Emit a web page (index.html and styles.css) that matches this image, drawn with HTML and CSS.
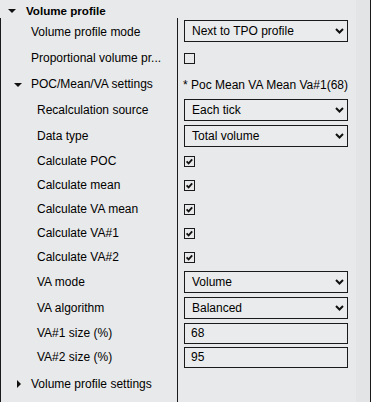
FILE: index.html
```html
<!DOCTYPE html>
<html>
<head>
<meta charset="utf-8">
<link rel="stylesheet" href="styles.css">
</head>
<body>
<div class="panel">
  <div class="content">
    <div class="header">
      <span class="tri-down tri-head"></span>
      <span class="header-text">Volume profile</span>
    </div>
    <div class="grid">
      <div class="row h26">
        <div class="label l1">Volume profile mode</div>
        <div class="value"><div class="select"><span>Next to TPO profile</span><svg class="chev" width="9" height="6" viewBox="0 0 9 6"><polyline points="1,1 4.5,4.5 8,1" fill="none" stroke="#111" stroke-width="2"/></svg></div></div>
      </div>
      <div class="row h26">
        <div class="label l1">Proportional volume pr...</div>
        <div class="value"><span class="cb"></span></div>
      </div>
      <div class="row h26">
        <div class="label l1 group"><span class="tri-down tri-poc"></span>POC/Mean/VA settings</div>
        <div class="value text">* Poc Mean VA Mean Va#1(68)</div>
      </div>
      <div class="row h26">
        <div class="label l2">Recalculation source</div>
        <div class="value"><div class="select"><span>Each tick</span><svg class="chev" width="9" height="6" viewBox="0 0 9 6"><polyline points="1,1 4.5,4.5 8,1" fill="none" stroke="#111" stroke-width="2"/></svg></div></div>
      </div>
      <div class="row h26">
        <div class="label l2">Data type</div>
        <div class="value"><div class="select"><span>Total volume</span><svg class="chev" width="9" height="6" viewBox="0 0 9 6"><polyline points="1,1 4.5,4.5 8,1" fill="none" stroke="#111" stroke-width="2"/></svg></div></div>
      </div>
      <div class="row h24">
        <div class="label l2">Calculate POC</div>
        <div class="value"><span class="cb"><svg width="9" height="9" viewBox="0 0 9 9"><polyline points="1.6,4.4 3.6,6.4 7.2,2.4" fill="none" stroke="#111" stroke-width="1.8"/></svg></span></div>
      </div>
      <div class="row h24">
        <div class="label l2">Calculate mean</div>
        <div class="value"><span class="cb"><svg width="9" height="9" viewBox="0 0 9 9"><polyline points="1.6,4.4 3.6,6.4 7.2,2.4" fill="none" stroke="#111" stroke-width="1.8"/></svg></span></div>
      </div>
      <div class="row h24">
        <div class="label l2">Calculate VA mean</div>
        <div class="value"><span class="cb"><svg width="9" height="9" viewBox="0 0 9 9"><polyline points="1.6,4.4 3.6,6.4 7.2,2.4" fill="none" stroke="#111" stroke-width="1.8"/></svg></span></div>
      </div>
      <div class="row h24">
        <div class="label l2">Calculate VA#1</div>
        <div class="value"><span class="cb"><svg width="9" height="9" viewBox="0 0 9 9"><polyline points="1.6,4.4 3.6,6.4 7.2,2.4" fill="none" stroke="#111" stroke-width="1.8"/></svg></span></div>
      </div>
      <div class="row h24">
        <div class="label l2">Calculate VA#2</div>
        <div class="value"><span class="cb"><svg width="9" height="9" viewBox="0 0 9 9"><polyline points="1.6,4.4 3.6,6.4 7.2,2.4" fill="none" stroke="#111" stroke-width="1.8"/></svg></span></div>
      </div>
      <div class="row h26">
        <div class="label l2">VA mode</div>
        <div class="value"><div class="select"><span>Volume</span><svg class="chev" width="9" height="6" viewBox="0 0 9 6"><polyline points="1,1 4.5,4.5 8,1" fill="none" stroke="#111" stroke-width="2"/></svg></div></div>
      </div>
      <div class="row h26">
        <div class="label l2">VA algorithm</div>
        <div class="value"><div class="select"><span>Balanced</span><svg class="chev" width="9" height="6" viewBox="0 0 9 6"><polyline points="1,1 4.5,4.5 8,1" fill="none" stroke="#111" stroke-width="2"/></svg></div></div>
      </div>
      <div class="row h24">
        <div class="label l2">VA#1 size (%)</div>
        <div class="value"><div class="input">68</div></div>
      </div>
      <div class="row h24">
        <div class="label l2">VA#2 size (%)</div>
        <div class="value"><div class="input">95</div></div>
      </div>
      <div class="row h32">
        <div class="label l1 group"><span class="tri-right"></span>Volume profile settings</div>
        <div class="value"></div>
      </div>
    </div>
  </div>
  <div class="scrollbar"></div>
</div>
</body>
</html>
```
FILE: styles.css
```css
html, body {
  margin: 0;
  padding: 0;
  background: #e8e9ea;
}
body {
  font-family: "Liberation Sans", Arial, sans-serif;
  font-size: 12px;
  color: #000;
}
.panel {
  display: flex;
  width: 371px;
  height: 402px;
  overflow: hidden;
  box-sizing: border-box;
  border-right: 1px solid #1a1a1a;
}
.content {
  flex: 1;
  display: flex;
  flex-direction: column;
}
.scrollbar {
  width: 14px;
  background: #e3e4e5;
}
.header {
  height: 19px;
  display: flex;
  align-items: center;
  position: relative;
}
.header-text {
  font-weight: bold;
  font-size: 11.6px;
  margin-left: 26px;
  padding-top: 2px;
}
.tri-down {
  display: block;
  width: 0;
  height: 0;
  border-left: 4px solid transparent;
  border-right: 4px solid transparent;
  border-top: 4px solid #111;
}
.tri-head {
  position: absolute;
  left: 8px;
  top: 9px;
}
.tri-poc {
  position: absolute;
  left: 13px;
  top: 12px;
}
.tri-right {
  position: absolute;
  left: 16px;
  top: 11px;
  width: 0;
  height: 0;
  border-top: 4px solid transparent;
  border-bottom: 4px solid transparent;
  border-left: 4px solid #111;
}
.grid {
  flex: 1;
  display: flex;
  flex-direction: column;
  border-left: 1px solid #1a1a1a;
}
.row {
  display: flex;
}
.h24 { height: 24px; }
.h26 { height: 26px; }
.h32 { height: 33px; }
.row:first-child { height: 27px; }
.label {
  width: 176px;
  box-sizing: border-box;
  display: flex;
  align-items: center;
  white-space: nowrap;
  overflow: hidden;
  position: relative;
}
.h32 .label { padding-bottom: 3px; }
.l1 { padding-left: 30px; }
.l2 { padding-left: 36px; }
.value {
  flex: 1;
  border-left: 1px solid #1a1a1a;
  display: flex;
  align-items: center;
  padding-left: 6px;
}
.value.text {
  padding-left: 5px;
  padding-top: 2px;
}
.select {
  width: 164px;
  height: 22px;
  box-sizing: border-box;
  border: 1px solid #1a1a1a;
  background: #eaebec;
  display: flex;
  align-items: center;
  justify-content: space-between;
  padding: 0 3px 0 7px;
  margin-top: -1px;
}
.chev {
  display: block;
}
.input {
  width: 164px;
  height: 21px;
  box-sizing: border-box;
  border: 1px solid #1a1a1a;
  background: #eaebec;
  display: flex;
  align-items: center;
  padding-left: 6px;
}
.cb {
  width: 11px;
  height: 11px;
  box-sizing: border-box;
  border: 1px solid #1a1a1a;
  display: flex;
  align-items: center;
  justify-content: center;
}
.cb svg { display: block; }
```
